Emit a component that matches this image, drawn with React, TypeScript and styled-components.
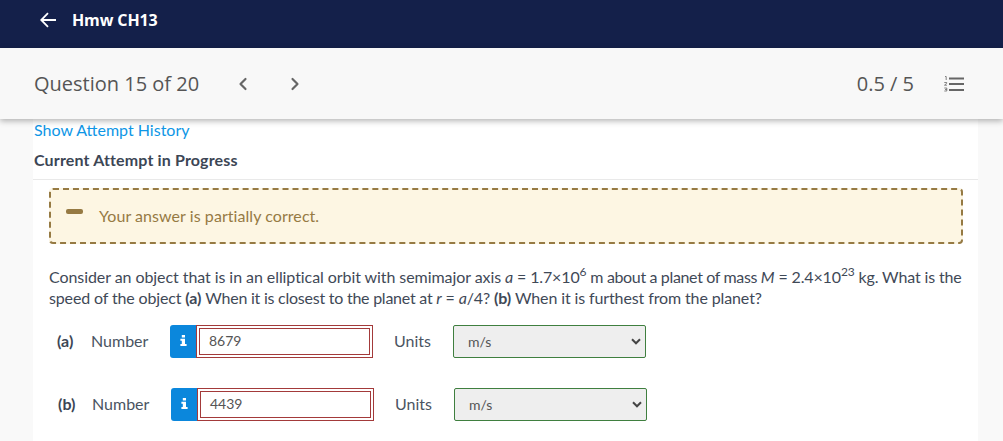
import React from "react";
import styled, { createGlobalStyle } from "styled-components";
import { ChevronLeft, ChevronRight } from "lucide-react";

const Global = createGlobalStyle`
  html, body { margin: 0; padding: 0; background: #f9f9f9; height: 441px; overflow: hidden; }
  * { box-sizing: border-box; }
`;
const Page = styled.div`
  width: 1003px; height: 441px; overflow: hidden; font-family: Lato, sans-serif; background: #f9f9f9;
`;
const TopBar = styled.header`
  height: 48px; background: #14204a; color: #fff; display: flex; align-items: center;
  padding: 0 0 8px 40px; gap: 16px; font-weight: 700; font-size: 16px; letter-spacing: -0.12px;
  font-family: "Open Sans", sans-serif;
`;
const SubBar = styled.div`
  position: relative; z-index: 2; height: 71px; background: #f8f8f8; box-shadow: 0 2px 6px rgba(0,0,0,.3);
  display: flex; align-items: center; padding: 0 39px 0 34px; color: #555;
  font-family: "Open Sans", sans-serif;
`;
const Title = styled.div`font-size: 20px; margin-right: 34px; white-space: nowrap; padding-bottom: 1px;`;
const Nav = styled.div`display: flex; gap: 32px; color: #666; align-items: center;`;
const Score = styled.div`margin-left: auto; font-size: 20px; margin-right: 30px; padding-bottom: 1px;`;
const Sheet = styled.main`
  margin: 0 25px 0 33px; background: #fff; height: 322px; color: #3c4655;
`;
const Meta = styled.div`padding: 1px 0 0 1px;`;
const Link = styled.a`display: block; color: #0e96e6; font-size: 16px; line-height: 20px;`;
const Heading = styled.div`
  font-weight: 700; font-size: 16px; line-height: 20px; margin-top: 10px; padding-bottom: 9px;
  letter-spacing: 0.15px; border-bottom: 1px solid #e9e9e9; margin-left: -1px; padding-left: 1px;
`;
const Notice = styled.div`
  margin: 8px 15px 0 16px; height: 56px; background: #fdf6e3; border: 2px dashed #967a43; border-radius: 4px;
  display: flex; align-items: center; padding: 0 0 2px 15px; color: #967a43; font-size: 16px; letter-spacing: 0.06px;
`;
const Dash = styled.span`
  width: 17px; height: 5px; border-radius: 2px; background: #967a43; margin-right: 16px; margin-top: -7px;
`;
const Prompt = styled.p`
  margin: 22px 16px 0 16px; font-size: 16px; line-height: 21px; color: #3f4957; letter-spacing: -0.14px;
  sup { font-size: 12px; line-height: 0; position: relative; top: -1px; }
`;
const Run = styled.span<{ $track: number }>`letter-spacing: ${p => p.$track}px;`;
const Row = styled.div<{ $shift: number; $top: number }>`
  display: flex; align-items: center; height: 33px; margin-top: ${p => p.$top}px;
  padding-left: ${p => 24 + p.$shift}px; font-size: 16px; color: #3c4655;
`;
const RowText = styled.span`padding-bottom: 2px;`;
const Part = styled(RowText)`font-weight: 700; width: 34px;`;
const Label = styled(RowText)`width: 79px; color: #4a5462;`;
const InfoBtn = styled.span`
  width: 26px; height: 33px; background: #0b87dc; border-radius: 3px 0 0 3px;
  display: flex; align-items: center; justify-content: center; padding-bottom: 2px;
`;
const Field = styled.span`
  width: 177px; height: 33px; border: 1px solid #a33a3a; padding: 2px; display: block;
`;
const Inner = styled.span`
  display: flex; align-items: center; height: 100%; border: 1px solid #a33a3a; padding: 0 0 2px 9px;
  font-size: 14px; color: #555;
`;
const UnitsLabel = styled(RowText)`margin-left: 21px; width: 59px; color: #4a5462;`;
const Select = styled.span`
  width: 193px; height: 33px; background: #eee; border: 1px solid #3f7f3f; border-radius: 2px;
  display: flex; align-items: center; justify-content: space-between; padding: 0 4px 0 14px;
  font-size: 14px; color: #555;
`;

const BackArrow = () => (
  <svg width="16" height="16" viewBox="0 0 16 16" fill="none">
    <path d="M16 8H1.5M8 1.2L1.2 8 8 14.8" stroke="#fff" strokeWidth="1.8" />
  </svg>
);
const ListIcon = () => (
  <svg width="20" height="16" viewBox="0 0 20 16" fill="none">
    <path d="M5 2.5h15M5 8h15M5 14h15" stroke="#666" strokeWidth="2" />
    <path d="M1 .5h1.2v3.5M.3 6.5h2.4v.8L.5 9.2h2.4M.3 12h2.5v3H.3M1 13.5h1.8" stroke="#666" strokeWidth=".8" />
  </svg>
);
const Caret = () => (
  <svg width="10" height="7" viewBox="0 0 10 7" fill="none">
    <path d="M1 1.3l4 4 4-4" stroke="#444" strokeWidth="2" />
  </svg>
);
const InfoGlyph = () => (
  <svg width="7" height="11" viewBox="0 0 7 11" fill="#fff">
    <path d="M1.8 0H5v2.6H1.8zM.4 3.8H5v5.2h1.6v2H.4V9h1.4V5.8H.4z" />
  </svg>
);

const Answer = ({ part, value, shift, top }: { part: string; value: string; shift: number; top: number }) => (
  <Row $shift={shift} $top={top}>
    <Part>{part}</Part>
    <Label>Number</Label>
    <InfoBtn><InfoGlyph /></InfoBtn>
    <Field><Inner>{value}</Inner></Field>
    <UnitsLabel>Units</UnitsLabel>
    <Select>m/s<Caret /></Select>
  </Row>
);

export default function App() {
  return (
    <Page>
      <Global />
      <TopBar><BackArrow />Hmw CH13</TopBar>
      <SubBar>
        <Title>Question 15 of 20</Title>
        <Nav><ChevronLeft size={20} strokeWidth={2.6} /><ChevronRight size={20} strokeWidth={2.6} /></Nav>
        <Score>0.5 / 5</Score>
        <ListIcon />
      </SubBar>
      <Sheet>
        <Meta>
          <Link>Show Attempt History</Link>
          <Heading>Current Attempt in Progress</Heading>
        </Meta>
        <Notice><Dash />Your answer is partially correct.</Notice>
        <Prompt>
          <Run $track={-0.07}>Consider an object that is in an elliptical orbit with semimajor axis </Run><i>a</i> = 1.7×10<sup>6</sup> <Run $track={-0.35}>m about a planet of mass </Run><i>M</i> = 2.4×10<sup>23</sup> kg. What is the speed of the object <b>(a)</b> <Run $track={-0.24}>When it is closest to the planet at </Run><i>r</i> = <i>a</i>/4? <b>(b)</b> <Run $track={-0.12}>When it is furthest from the planet?</Run>
        </Prompt>
        <Answer part="(a)" value="8679" shift={0} top={17} />
        <Answer part="(b)" value="4439" shift={1} top={30} />
      </Sheet>
    </Page>
  );
}
